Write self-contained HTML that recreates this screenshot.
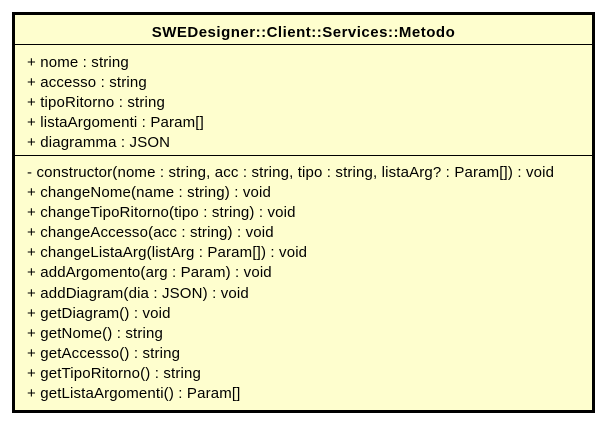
<!DOCTYPE html>
<html><head><meta charset="utf-8"><style>
html,body{margin:0;padding:0;background:#fff;width:608px;height:425px;overflow:hidden}
.box{position:absolute;left:12px;top:12px;width:577px;height:395px;border:3px solid #000;background:#FEFECE}
.hl{position:absolute;left:0;right:0;height:1px;background:#000}
.t{position:absolute;left:0;right:0;text-align:center;font:bold 15px "Liberation Sans",sans-serif;letter-spacing:0.5px;color:#000;line-height:18px}
.r{position:absolute;left:12px;font:15px "Liberation Sans",sans-serif;letter-spacing:0.15px;color:#000;white-space:nowrap;line-height:16px}
</style></head><body>
<div class="box">
<div class="t" style="top:9px">SWEDesigner::Client::Services::Metodo</div>
<div class="hl" style="top:29px"></div>
<div class="r" style="top:40px">+ nome : string</div>
<div class="r" style="top:60px">+ accesso : string</div>
<div class="r" style="top:80px">+ tipoRitorno : string</div>
<div class="r" style="top:100px">+ listaArgomenti : Param[]</div>
<div class="r" style="top:120px">+ diagramma : JSON</div>
<div class="hl" style="top:140px"></div>
<div class="r" style="top:150px">- constructor(nome : string, acc : string, tipo : string, listaArg? : Param[]) : void</div>
<div class="r" style="top:170px">+ changeNome(name : string) : void</div>
<div class="r" style="top:190px">+ changeTipoRitorno(tipo : string) : void</div>
<div class="r" style="top:210px">+ changeAccesso(acc : string) : void</div>
<div class="r" style="top:230px">+ changeListaArg(listArg : Param[]) : void</div>
<div class="r" style="top:250px">+ addArgomento(arg : Param) : void</div>
<div class="r" style="top:271px">+ addDiagram(dia : JSON) : void</div>
<div class="r" style="top:291px">+ getDiagram() : void</div>
<div class="r" style="top:311px">+ getNome() : string</div>
<div class="r" style="top:331px">+ getAccesso() : string</div>
<div class="r" style="top:351px">+ getTipoRitorno() : string</div>
<div class="r" style="top:371px">+ getListaArgomenti() : Param[]</div>
</div>
</body></html>
